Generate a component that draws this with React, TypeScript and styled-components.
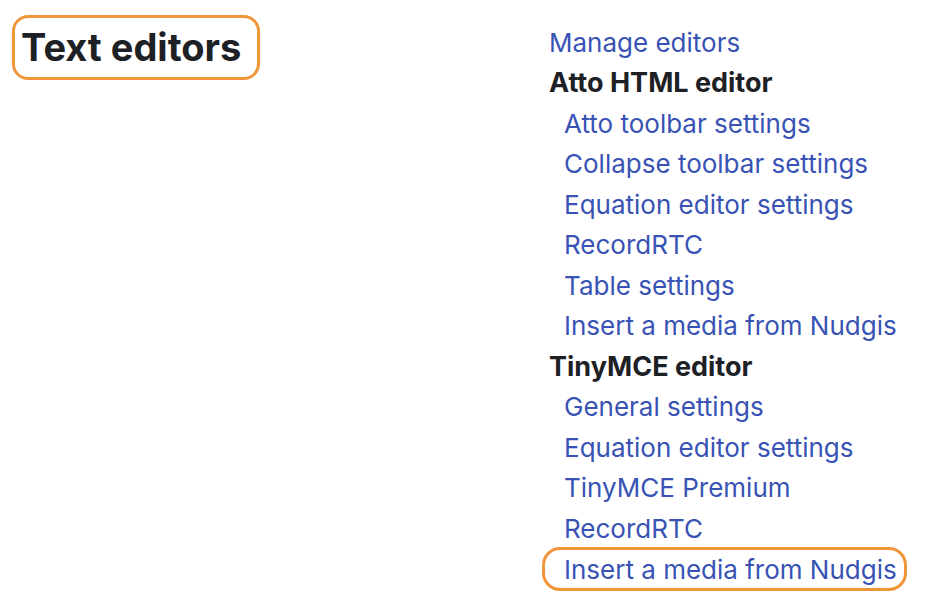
import React from 'react';
import styled, { createGlobalStyle } from 'styled-components';

const GlobalStyle = createGlobalStyle`
  body {
    margin: 0;
    background: #ffffff;
    font-family: Inter, "Liberation Sans", sans-serif;
    color: #1d2125;
  }
`;

interface Item {
  label: string;
  kind: 'link' | 'heading' | 'sub';
  marked?: boolean;
}

const items: Item[] = [
  { label: 'Manage editors', kind: 'link' },
  { label: 'Atto HTML editor', kind: 'heading' },
  { label: 'Atto toolbar settings', kind: 'sub' },
  { label: 'Collapse toolbar settings', kind: 'sub' },
  { label: 'Equation editor settings', kind: 'sub' },
  { label: 'RecordRTC', kind: 'sub' },
  { label: 'Table settings', kind: 'sub' },
  { label: 'Insert a media from Nudgis', kind: 'sub' },
  { label: 'TinyMCE editor', kind: 'heading' },
  { label: 'General settings', kind: 'sub' },
  { label: 'Equation editor settings', kind: 'sub' },
  { label: 'TinyMCE Premium', kind: 'sub' },
  { label: 'RecordRTC', kind: 'sub' },
  { label: 'Insert a media from Nudgis', kind: 'sub', marked: true },
];

const App: React.FC = () => {
  return (
    <React.Fragment>
      <GlobalStyle />
      <Page>
        <TitleCol>
          <Title>Text editors</Title>
        </TitleCol>
        <Nav>
          {items.map((item, i) => (
            <Row key={i} $indent={item.kind === 'sub'}>
              {item.kind === 'heading' ? (
                <Heading>{item.label}</Heading>
              ) : (
                <Link href="#" $marked={item.marked}>{item.label}</Link>
              )}
            </Row>
          ))}
        </Nav>
      </Page>
    </React.Fragment>
  );
};

export default App;

const Page = styled.div`
  display: flex;
  width: 932px;
  height: 605px;
  box-sizing: border-box;
  padding: 15px 0 0 12px;
`

const TitleCol = styled.div`
  width: 537px;
  flex-shrink: 0;
`

const Title = styled.h1`
  display: inline-block;
  margin: 0;
  padding: 8px 16px 8px 6px;
  border: 3px solid #f0963a;
  border-radius: 16px;
  font-size: 38px;
  font-weight: 700;
  line-height: 43px;
  color: #1d2125;
`

const Nav = styled.div`
  display: flex;
  flex-direction: column;
  padding-top: 7px;
`

const Row = styled.div<{ $indent?: boolean }>`
  height: 40.5px;
  display: flex;
  align-items: center;
  padding-left: ${p => (p.$indent ? '15px' : '0')};
`

const Heading = styled.span`
  font-size: 27px;
  font-weight: 700;
  color: #1d2125;
`

const Link = styled.a<{ $marked?: boolean }>`
  font-size: 26px;
  line-height: 31px;
  color: #3853b4;
  text-decoration: none;
  border-radius: 18px;
  margin-left: ${p => (p.$marked ? '-22px' : '0')};
  padding: ${p => (p.$marked ? '4px 7px 3px 19px' : '0')};
  border: ${p => (p.$marked ? '3px solid #f0963a' : 'none')};
`
